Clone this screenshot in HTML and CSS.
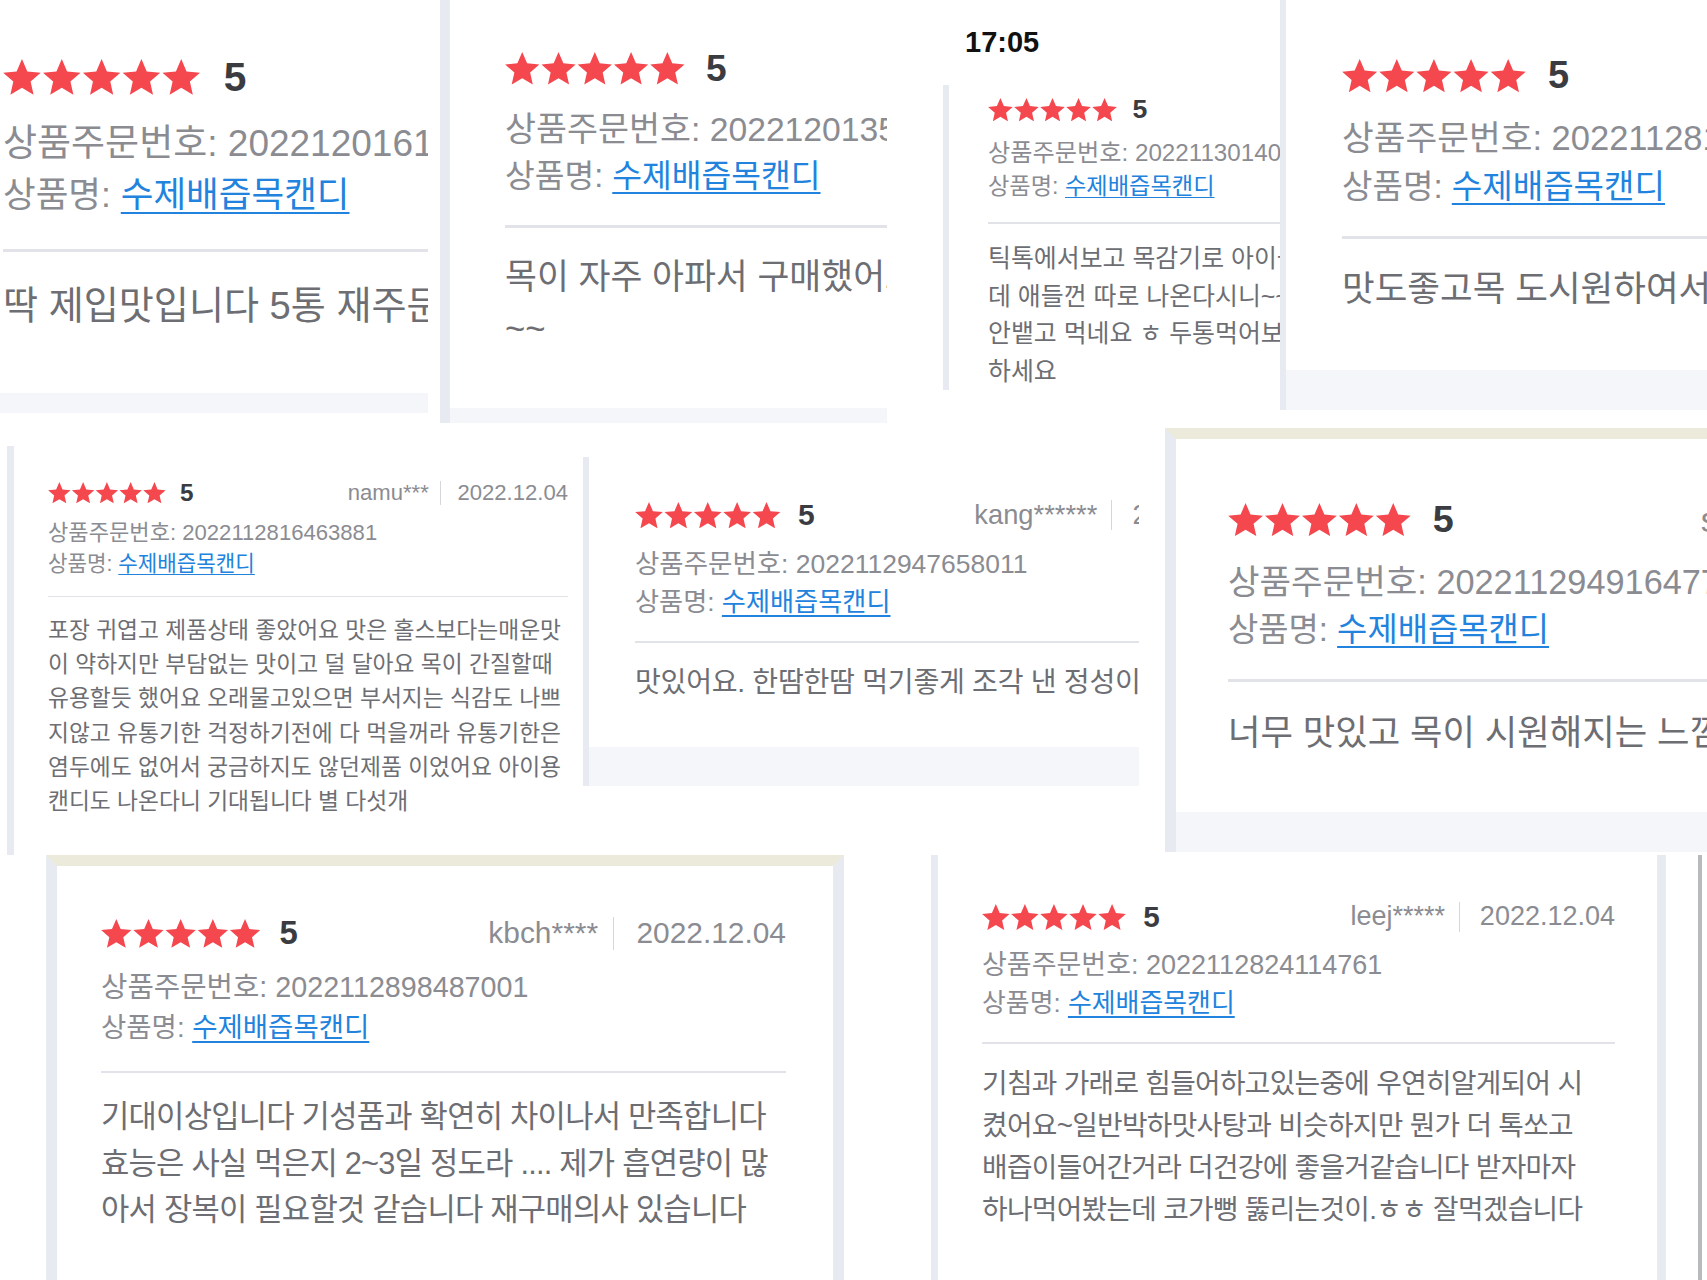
FILE: index.html
```html
<!DOCTYPE html>
<html lang="ko">
<head>
    <meta charset="UTF-8">
    <meta name="viewport" content="width=device-width, initial-scale=1.0">
    <title>수제배즙목캔디 리뷰 모음</title>
    <link rel="stylesheet" href="styles.css">
</head>
<body>

    <svg class="defs" width="0" height="0" aria-hidden="true">
        <defs>
            <polygon id="star" points="50,2 63.5,33.4 97.6,36.6 71.9,59.1 79.4,92.5 50,75 20.6,92.5 28.1,59.1 2.4,36.6 36.5,33.4"/>
        </defs>
    </svg>

    <div class="collage">

        <!-- top row -->
        <div class="shot t1">
            <div class="card">
                <div class="head">
                    <svg class="stars" viewBox="2 2 500 91"><use href="#star"/><use href="#star" x="101"/><use href="#star" x="202"/><use href="#star" x="303"/><use href="#star" x="404"/></svg>
                    <b class="score">5</b>
                </div>
                <p class="order">상품주문번호: 2022120161613275</p>
                <p class="name">상품명: <a href="#">수제배즙목캔디</a></p>
                <div class="rule"></div>
                <p class="text">딱 제입맛입니다 5통 재주문했어요</p>
            </div>
            <div class="band"></div>
        </div>

        <div class="shot t2">
            <div class="card">
                <div class="head">
                    <svg class="stars" viewBox="2 2 500 91"><use href="#star"/><use href="#star" x="101"/><use href="#star" x="202"/><use href="#star" x="303"/><use href="#star" x="404"/></svg>
                    <b class="score">5</b>
                </div>
                <p class="order">상품주문번호: 2022120135124093</p>
                <p class="name">상품명: <a href="#">수제배즙목캔디</a></p>
                <div class="rule"></div>
                <p class="text">목이 자주 아파서 구매했어요 효과 좋네요<br>~~</p>
            </div>
            <div class="band"></div>
        </div>

        <div class="clock">17:05</div>

        <div class="shot t3">
            <div class="card">
                <div class="head">
                    <svg class="stars" viewBox="2 2 500 91"><use href="#star"/><use href="#star" x="101"/><use href="#star" x="202"/><use href="#star" x="303"/><use href="#star" x="404"/></svg>
                    <b class="score">5</b>
                </div>
                <p class="order">상품주문번호: 2022113014005261</p>
                <p class="name">상품명: <a href="#">수제배즙목캔디</a></p>
                <div class="rule"></div>
                <p class="text">틱톡에서보고 목감기로 아이들 먹이려고 샀는<br>데 애들껀 따로 나온다시니~~ 그래도 애들이<br>안뱉고 먹네요 ㅎ 두통먹어보고 다들 구매<br>하세요</p>
            </div>
        </div>

        <div class="shot t4">
            <div class="card">
                <div class="head">
                    <svg class="stars" viewBox="2 2 500 91"><use href="#star"/><use href="#star" x="101"/><use href="#star" x="202"/><use href="#star" x="303"/><use href="#star" x="404"/></svg>
                    <b class="score">5</b>
                </div>
                <p class="order">상품주문번호: 2022112817293406</p>
                <p class="name">상품명: <a href="#">수제배즙목캔디</a></p>
                <div class="rule"></div>
                <p class="text">맛도좋고목 도시원하여서 좋아요</p>
            </div>
            <div class="band"></div>
        </div>

        <!-- middle row -->
        <div class="shot t5">
            <div class="card">
                <div class="head">
                    <svg class="stars" viewBox="2 2 500 91"><use href="#star"/><use href="#star" x="101"/><use href="#star" x="202"/><use href="#star" x="303"/><use href="#star" x="404"/></svg>
                    <b class="score">5</b>
                    <span class="meta">namu***<i class="sep"></i>2022.12.04</span>
                </div>
                <p class="order">상품주문번호: 2022112816463881</p>
                <p class="name">상품명: <a href="#">수제배즙목캔디</a></p>
                <div class="rule"></div>
                <p class="text">포장 귀엽고 제품상태 좋았어요 맛은 홀스보다는매운맛<br>이 약하지만 부담없는 맛이고 덜 달아요 목이 간질할때<br>유용할듯 했어요 오래물고있으면 부서지는 식감도 나쁘<br>지않고 유통기한 걱정하기전에 다 먹을꺼라 유통기한은<br>염두에도 없어서 궁금하지도 않던제품 이었어요 아이용<br>캔디도 나온다니 기대됩니다 별 다섯개</p>
            </div>
        </div>

        <div class="shot t6">
            <div class="card">
                <div class="head">
                    <svg class="stars" viewBox="2 2 500 91"><use href="#star"/><use href="#star" x="101"/><use href="#star" x="202"/><use href="#star" x="303"/><use href="#star" x="404"/></svg>
                    <b class="score">5</b>
                    <span class="meta">kang******<i class="sep"></i>2022.12.04</span>
                </div>
                <p class="order">상품주문번호: 2022112947658011</p>
                <p class="name">상품명: <a href="#">수제배즙목캔디</a></p>
                <div class="rule"></div>
                <p class="text">맛있어요. 한땀한땀 먹기좋게 조각 낸 정성이 느껴져요</p>
            </div>
            <div class="band"></div>
        </div>

        <div class="shot t7">
            <div class="card">
                <div class="head">
                    <svg class="stars" viewBox="2 2 500 91"><use href="#star"/><use href="#star" x="101"/><use href="#star" x="202"/><use href="#star" x="303"/><use href="#star" x="404"/></svg>
                    <b class="score">5</b>
                    <span class="meta">sang****<i class="sep"></i>2022.12.04</span>
                </div>
                <p class="order">상품주문번호: 2022112949164772</p>
                <p class="name">상품명: <a href="#">수제배즙목캔디</a></p>
                <div class="rule"></div>
                <p class="text">너무 맛있고 목이 시원해지는 느낌이에요</p>
            </div>
            <div class="band"></div>
        </div>

        <!-- bottom row -->
        <div class="shot t8">
            <div class="card">
                <div class="head">
                    <svg class="stars" viewBox="2 2 500 91"><use href="#star"/><use href="#star" x="101"/><use href="#star" x="202"/><use href="#star" x="303"/><use href="#star" x="404"/></svg>
                    <b class="score">5</b>
                    <span class="meta">kbch****<i class="sep"></i>2022.12.04</span>
                </div>
                <p class="order">상품주문번호: 2022112898487001</p>
                <p class="name">상품명: <a href="#">수제배즙목캔디</a></p>
                <div class="rule"></div>
                <p class="text">기대이상입니다 기성품과 확연히 차이나서 만족합니다<br>효능은 사실 먹은지 2~3일 정도라 .... 제가 흡연량이 많<br>아서 장복이 필요할것 같습니다 재구매의사 있습니다</p>
            </div>
        </div>

        <div class="shot t9">
            <div class="card">
                <div class="head">
                    <svg class="stars" viewBox="2 2 500 91"><use href="#star"/><use href="#star" x="101"/><use href="#star" x="202"/><use href="#star" x="303"/><use href="#star" x="404"/></svg>
                    <b class="score">5</b>
                    <span class="meta">leej*****<i class="sep"></i>2022.12.04</span>
                </div>
                <p class="order">상품주문번호: 2022112824114761</p>
                <p class="name">상품명: <a href="#">수제배즙목캔디</a></p>
                <div class="rule"></div>
                <p class="text">기침과 가래로 힘들어하고있는중에 우연히알게되어 시<br>켰어요~일반박하맛사탕과 비슷하지만 뭔가 더 톡쏘고<br>배즙이들어간거라 더건강에 좋을거같습니다 받자마자<br>하나먹어봤는데 코가뻥 뚫리는것이.ㅎㅎ 잘먹겠습니다</p>
            </div>
        </div>

        <div class="edge"></div>

    </div>

</body>
</html>
```

FILE: styles.css
```css
* {
    margin: 0;
    padding: 0;
    box-sizing: border-box;
}

body {
    background-color: #ffffff;
    font-family: "Liberation Sans", "Noto Sans CJK KR", sans-serif;
}

.defs {
    position: absolute;
}

.collage {
    position: relative;
    width: 1707px;
    height: 1280px;
    overflow: hidden;
    background-color: #ffffff;
}

/* each screenshot piece is a clipped window on the canvas */
.shot {
    position: absolute;
    overflow: hidden;
    background-color: #ffffff;
}

.head {
    display: flex;
    align-items: center;
    height: 1.1em;
}

.stars {
    height: 0.97em;
    width: 5.33em;
    fill: #f4474e;
    flex-shrink: 0;
}

.score {
    font-size: 1.1em;
    font-weight: 700;
    line-height: 1;
    color: #3b3c41;
    margin-left: 0.58em;
}

.meta {
    margin-left: auto;
    display: flex;
    align-items: center;
    color: #8b8c92;
    white-space: nowrap;
    line-height: 1;
}

.meta .sep {
    width: 1px;
    height: 1.1em;
    background-color: #d6d7dc;
    margin: 0 0.75em 0 0.5em;
}

.order,
.name {
    font-size: 1em;
    line-height: 1.4;
    color: #8b8c92;
    white-space: nowrap;
}

.name {
    font-size: 0.96em;
    line-height: 1.458;
}

.order {
    margin-top: 0.56em;
}

.name a {
    color: #2183de;
    text-decoration: underline;
    text-decoration-thickness: 0.06em;
    text-underline-offset: 0.14em;
}

.rule {
    height: 0.07em;
    min-height: 1px;
    background-color: #e2e3e8;
    margin-top: 0.74em;
}

.text {
    font-size: 1.03em;
    margin-top: 0.68em;
    line-height: 1.505;
    color: #6d6e73;
    white-space: nowrap;
    padding-bottom: 1.51em;
}

.band {
    height: 4em;
    background-color: #f5f6fa;
}

.clock {
    position: absolute;
    left: 965px;
    top: 28px;
    font-size: 29px;
    font-weight: 700;
    line-height: 1;
    color: #111111;
}

.edge {
    position: absolute;
    left: 1698px;
    top: 855px;
    width: 4px;
    height: 425px;
    background-color: #b9babd;
}

/* pieces */
.t1 {
    left: 0;
    top: 0;
    width: 428px;
    height: 413px;
    font-size: 37px;
}

.t1 .card {
    padding: 57px 0 0 3px;
    width: 900px;
}

.t2 {
    left: 440px;
    top: 0;
    width: 447px;
    height: 423px;
    border-left: 10px solid #e8eaf2;
    font-size: 33.7px;
}

.t2 .card {
    padding: 50px 0 0 55px;
    width: 900px;
}

.t3 {
    left: 943px;
    top: 85px;
    width: 337px;
    height: 305px;
    border-left: 6px solid #e8eaf2;
    font-size: 24.2px;
}

.t3 .card {
    padding: 11px 0 0 39px;
    width: 700px;
}

.t4 {
    left: 1280px;
    top: 0;
    width: 427px;
    height: 410px;
    border-left: 6px solid #e8eaf2;
    font-size: 34.5px;
}

.t4 .card {
    padding: 57px 0 0 56px;
    width: 900px;
}

.t5 {
    left: 7px;
    top: 446px;
    width: 575px;
    height: 409px;
    border-left: 7px solid #e8eaf2;
    font-size: 22.1px;
}

.t5 .card {
    padding: 35px 0 0 34px;
    width: 554px;
}

.t6 {
    left: 583px;
    top: 457px;
    width: 556px;
    height: 329px;
    border-left: 6px solid #e8eaf2;
    font-size: 27.3px;
}

.t6 .card {
    padding: 43px 0 0 46px;
    width: 680px;
}

.t6 .order {
    font-size: 0.97em;
    margin-top: 0.6em;
}

.t6 .text {
    letter-spacing: -0.01em;
}

.t7 {
    left: 1165px;
    top: 428px;
    width: 542px;
    height: 424px;
    border-left: 11px solid #e8eaf2;
    border-top: 11px solid #ecebdb;
    font-size: 34.3px;
}

.t7 .card {
    padding: 62px 0 0 52px;
    width: 868px;
}

.t8 {
    left: 46px;
    top: 855px;
    width: 798px;
    height: 425px;
    border: 11px solid #e8eaf2;
    border-top-color: #ecebdb;
    border-bottom: 0;
    font-size: 29.9px;
}

.t8 .card {
    padding: 51px 0 0 44px;
    width: 729px;
}

.t8 .order {
    font-size: 0.96em;
    margin-top: 0.6em;
}

.t8 .name {
    font-size: 0.92em;
    line-height: 1.52;
}

.t9 {
    left: 931px;
    top: 855px;
    width: 735px;
    height: 425px;
    border-left: 7px solid #e8eaf2;
    border-right: 9px solid #e8eaf2;
    font-size: 27px;
}

.t9 .card {
    padding: 47px 0 0 44px;
    width: 677px;
}

/* the two lower shots were taken with a narrower font */
.t8 .text,
.t9 .text {
    letter-spacing: -0.025em;
}
```
